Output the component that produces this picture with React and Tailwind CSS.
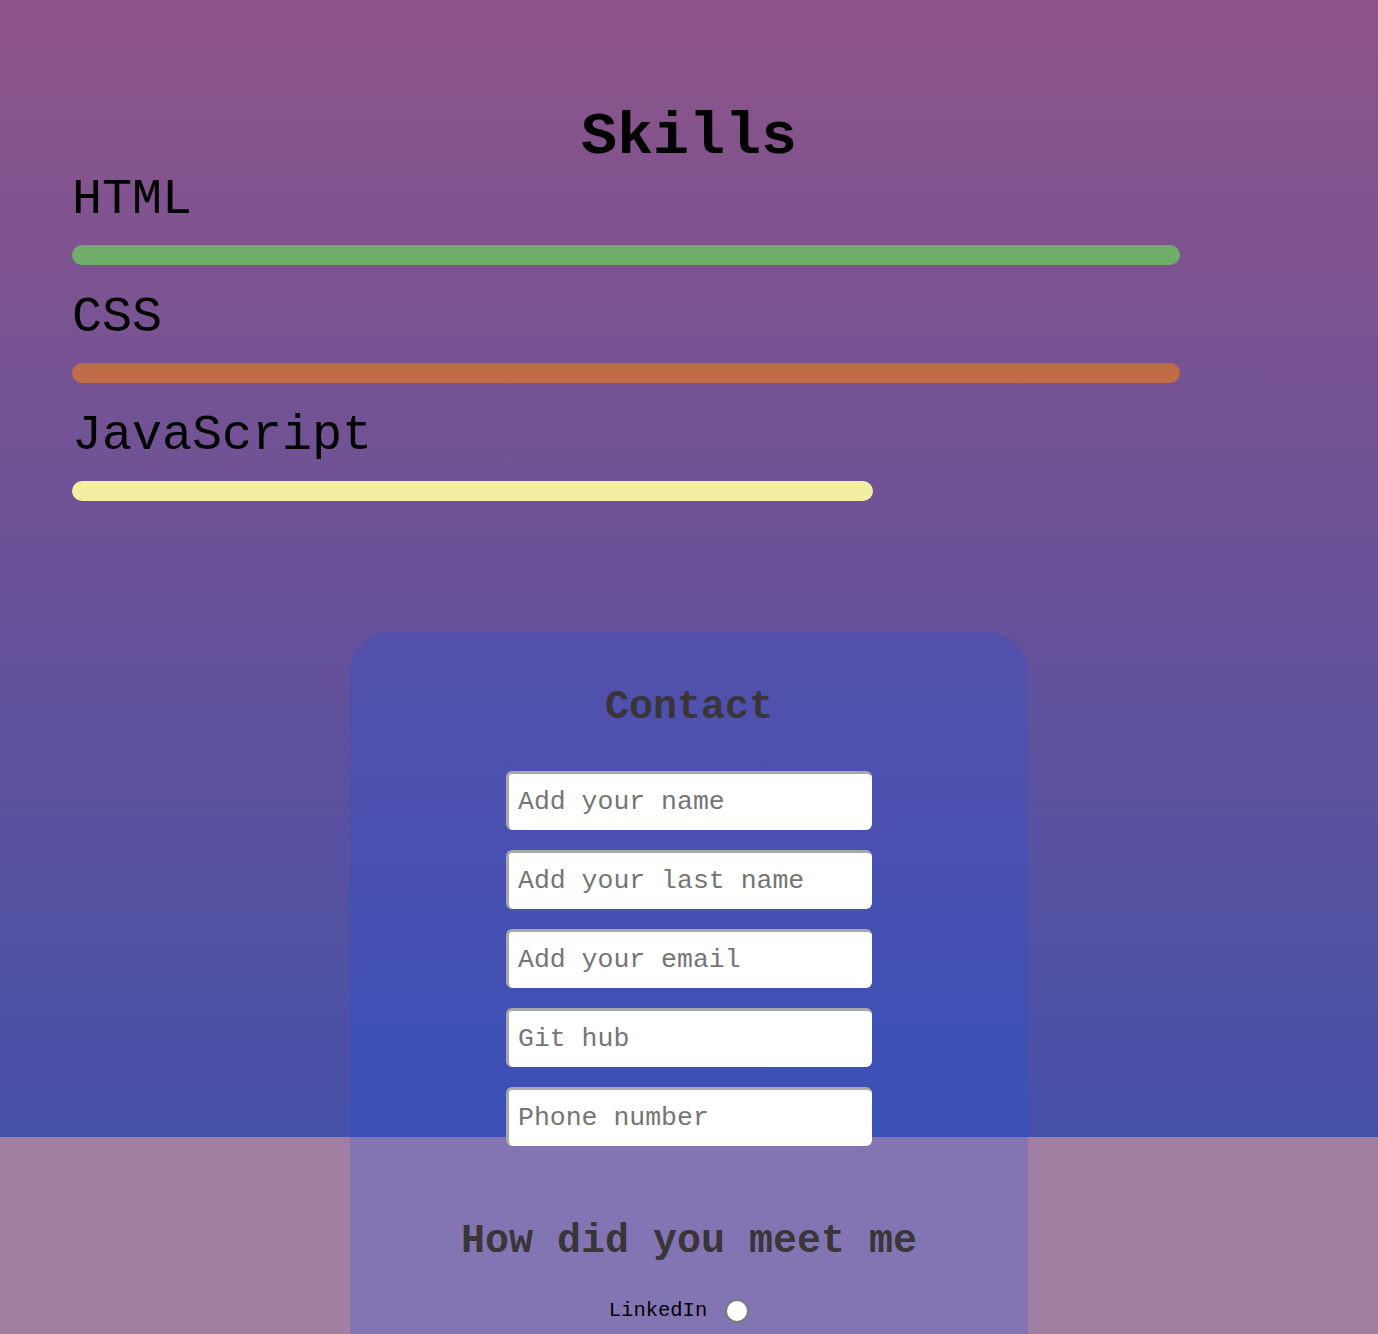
import React from 'react';

const skills = [
    { name: 'HTML', width: '89.8%', color: 'bg-[#6fae69]' },
    { name: 'CSS', width: '89.8%', color: 'bg-[#c06d47]' },
    { name: 'JavaScript', width: '64.9%', color: 'bg-[#f1f0a2]' },
];

const fields = ['Add your name', 'Add your last name', 'Add your email', 'Git hub', 'Phone number'];

const App = () => {
    return (
        <div className="min-h-screen bg-[linear-gradient(to_bottom,#8e5489_0px,#4550a7_1137px,#a07fa3_1137px)] font-['Liberation_Mono','Courier_New',monospace] pb-24">
            {/* skills */}
            <section className="px-[72px] pt-[107px]">
                <h1 className="text-center text-[60px] leading-none font-bold text-black">Skills</h1>
                <div className="mt-2">
                    {skills.map((s, i) => (
                        <div key={s.name} className={i === 0 ? '' : 'mt-7'}>
                            <h2 className="text-[50px] leading-none text-black">{s.name}</h2>
                            <div className={`mt-5 h-5 rounded-full ${s.color}`} style={{ width: s.width }} />
                        </div>
                    ))}
                </div>
            </section>

            {/* contact */}
            <section className="mx-auto mt-[131px] w-[678px] rounded-[40px] bg-[rgba(15,80,245,0.2)] pt-14 pb-20 flex flex-col items-center">
                <h2 className="text-[40px] leading-none font-bold text-[#3a3538]">Contact</h2>
                <form className="mt-[43px] flex flex-col gap-5">
                    {fields.map((f) => (
                        <input
                            key={f}
                            type="text"
                            placeholder={f}
                            className="w-[366px] h-[59px] bg-white rounded-md border-t-[3px] border-l-[3px] border-[#a9a9a9] pl-[9px] text-[26.5px] text-black placeholder:text-[#757575] outline-none font-['Liberation_Mono','Courier_New',monospace]"
                        />
                    ))}
                </form>
                <h2 className="mt-[76px] text-[40px] leading-none font-bold text-[#3a3538]">How did you meet me</h2>
                <label className="mt-[37px] pr-5 flex items-center gap-[18px] text-[20.5px] leading-none text-black">
                    LinkedIn
                    <span className="w-6 h-6 rounded-full bg-white border-2 border-[#7a7a7a]" />
                </label>
            </section>
        </div>
    );
};

export default App;
